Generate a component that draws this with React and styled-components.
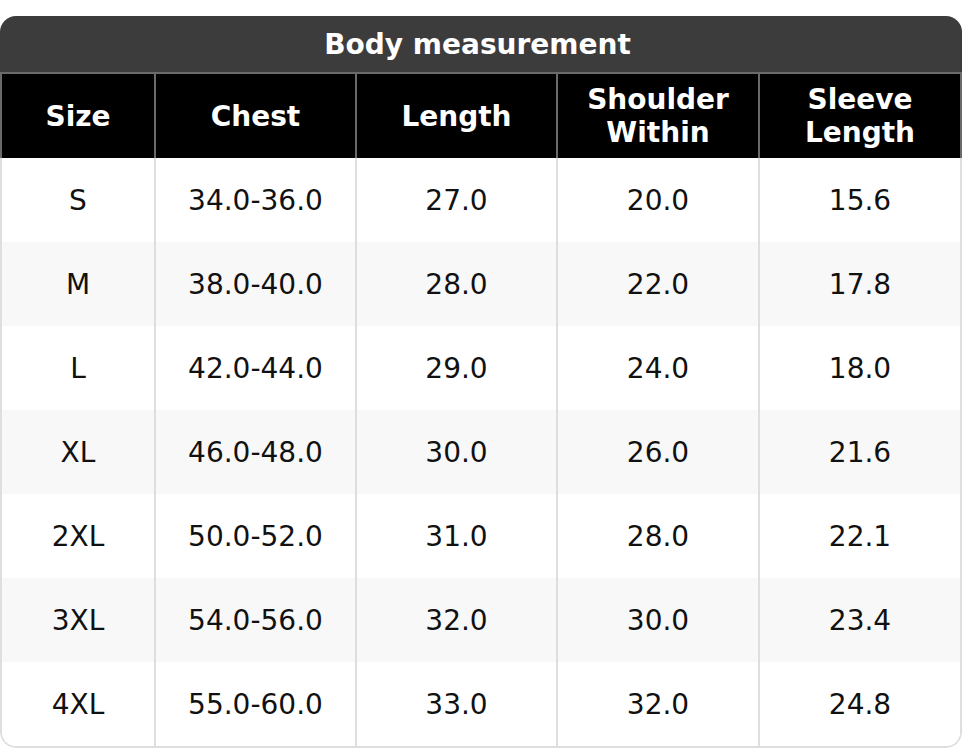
import React from 'react'
import styled, { createGlobalStyle } from 'styled-components'

const rows = [
    ['S', '34.0-36.0', '27.0', '20.0', '15.6'],
    ['M', '38.0-40.0', '28.0', '22.0', '17.8'],
    ['L', '42.0-44.0', '29.0', '24.0', '18.0'],
    ['XL', '46.0-48.0', '30.0', '26.0', '21.6'],
    ['2XL', '50.0-52.0', '31.0', '28.0', '22.1'],
    ['3XL', '54.0-56.0', '32.0', '30.0', '23.4'],
    ['4XL', '55.0-60.0', '33.0', '32.0', '24.8'],
]

const headers = ['Size', 'Chest', 'Length', ['Shoulder', 'Within'], ['Sleeve', 'Length']]

const App = () => {
    return (
        <>
            <GlobalStyle />
            <Card>
                <Title>Body measurement</Title>
                <HeadRow>
                    {headers.map((h, i) => (
                        <HeadCell key={i}>
                            {Array.isArray(h) ? <>{h[0]}<br />{h[1]}</> : h}
                        </HeadCell>
                    ))}
                </HeadRow>
                <Body>
                    {rows.map((r, i) => (
                        <Row key={r[0]} $striped={i % 2 === 1}>
                            {r.map((v, j) => (
                                <Cell key={j}>{v}</Cell>
                            ))}
                        </Row>
                    ))}
                </Body>
            </Card>
        </>
    )
}

export default App

const GlobalStyle = createGlobalStyle`
    body {
        margin: 0;
        background: #fff;
        font-family: "DejaVu Sans", Verdana, sans-serif;
    }
`

const columns = '154px 201px 201px 202px 1fr'

const Card = styled.div`
    margin-top: 16px;
    width: 962px;
    border-radius: 16px;
    overflow: hidden;
    background: #fff;
`
const Title = styled.div`
    height: 56px;
    display: flex;
    align-items: center;
    justify-content: center;
    padding-right: 7px;
    background: #3c3c3c;
    color: #fff;
    font-size: 28px;
    font-weight: bold;
    border-bottom: 2px solid #6a6a6a;
`
const HeadRow = styled.div`
    display: grid;
    grid-template-columns: ${columns};
    height: 84px;
    background: #000;
    border-left: 2px solid #6a6a6a;
    border-right: 2px solid #6a6a6a;
`
const HeadCell = styled.div`
    display: flex;
    align-items: center;
    justify-content: center;
    text-align: center;
    color: #fff;
    font-size: 28px;
    font-weight: bold;
    line-height: 33px;
    border-right: 2px solid #6a6a6a;
    &:last-child {
        border-right: none;
    }
`
const Body = styled.div`
    border: 2px solid #dedede;
    border-top: none;
    border-radius: 0 0 16px 16px;
    overflow: hidden;
`
const Row = styled.div`
    display: grid;
    grid-template-columns: ${columns};
    height: 84px;
    background: ${(p) => (p.$striped ? '#f8f8f8' : '#fff')};
`
const Cell = styled.div`
    display: flex;
    align-items: center;
    justify-content: center;
    color: #111;
    font-size: 28px;
    border-right: 2px solid #dedede;
    &:last-child {
        border-right: none;
    }
`
